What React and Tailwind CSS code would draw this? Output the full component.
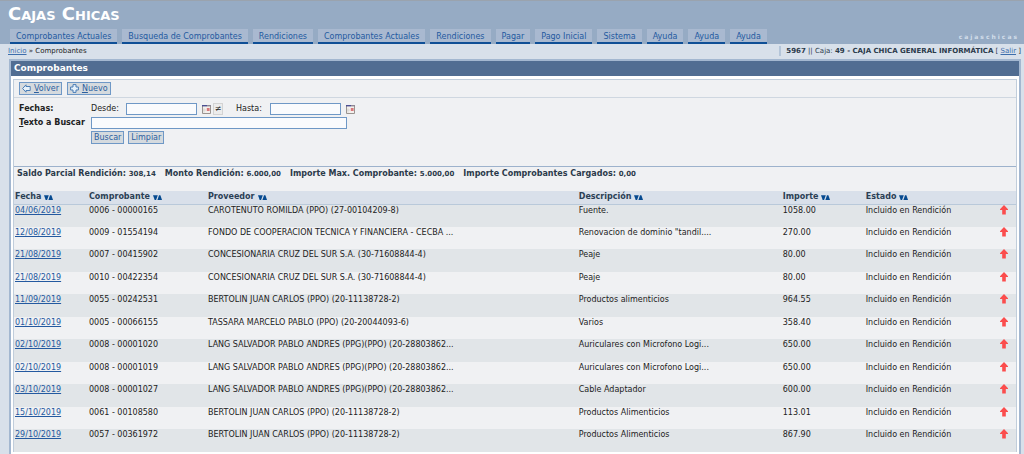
import React, { useState } from "react";

const menu = [
  "Comprobantes Actuales",
  "Busqueda de Comprobantes",
  "Rendiciones",
  "Comprobantes Actuales",
  "Rendiciones",
  "Pagar",
  "Pago Inicial",
  "Sistema",
  "Ayuda",
  "Ayuda",
  "Ayuda",
];

const totals = [
  { label: "Saldo Parcial Rendición:", value: "308,14" },
  { label: "Monto Rendición:", value: "6.000,00" },
  { label: "Importe Max. Comprobante:", value: "5.000,00" },
  { label: "Importe Comprobantes Cargados:", value: "0,00" },
];

const columns = [
  { name: "Fecha", width: "w-[74px]" },
  { name: "Comprobante", width: "w-[119px]" },
  { name: "Proveedor", width: "w-[37%]" },
  { name: "Descripción", width: "w-[204px]" },
  { name: "Importe", width: "w-[83px]" },
  { name: "Estado", width: "" },
];

const rows = [
  ["04/06/2019", "0006 - 00000165", "CAROTENUTO ROMILDA (PPO) (27-00104209-8)", "Fuente.", "1058.00"],
  ["12/08/2019", "0009 - 01554194", "FONDO DE COOPERACION TECNICA Y FINANCIERA - CECBA ...", 'Renovacion de dominio "tandil....', "270.00"],
  ["21/08/2019", "0007 - 00415902", "CONCESIONARIA CRUZ DEL SUR S.A. (30-71608844-4)", "Peaje", "80.00"],
  ["21/08/2019", "0010 - 00422354", "CONCESIONARIA CRUZ DEL SUR S.A. (30-71608844-4)", "Peaje", "80.00"],
  ["11/09/2019", "0055 - 00242531", "BERTOLIN JUAN CARLOS (PPO) (20-11138728-2)", "Productos alimenticios", "964.55"],
  ["01/10/2019", "0005 - 00066155", "TASSARA MARCELO PABLO (PPO) (20-20044093-6)", "Varios", "358.40"],
  ["02/10/2019", "0008 - 00001020", "LANG SALVADOR PABLO ANDRES (PPG)(PPO) (20-28803862...", "Auriculares con Microfono Logi...", "650.00"],
  ["02/10/2019", "0008 - 00001019", "LANG SALVADOR PABLO ANDRES (PPG)(PPO) (20-28803862...", "Auriculares con Microfono Logi...", "650.00"],
  ["03/10/2019", "0008 - 00001027", "LANG SALVADOR PABLO ANDRES (PPG)(PPO) (20-28803862...", "Cable Adaptador", "600.00"],
  ["15/10/2019", "0061 - 00108580", "BERTOLIN JUAN CARLOS (PPO) (20-11138728-2)", "Productos Alimenticios", "113.01"],
  ["29/10/2019", "0057 - 00361972", "BERTOLIN JUAN CARLOS (PPO) (20-11138728-2)", "Productos Alimenticios", "867.90"],
];

function ActionButton({ children, ...props }) {
  return (
    <button
      type="button"
      className="flex h-[13px] items-center gap-[3px] border border-[#6f98c6] bg-[#d5dade] px-[2px] text-[8px] leading-none text-[#2c5f9e]"
      {...props}
    >
      {children}
    </button>
  );
}

function BackIcon() {
  return (
    <svg viewBox="0 0 9 9" className="h-[9px] w-[9px]" fill="#e6f1fa" stroke="#4a7db5" strokeLinejoin="round">
      <path d="M.6 4.5 4 .8v1.7h4.2v4H4v1.7z" />
    </svg>
  );
}

function PlusIcon() {
  return (
    <svg viewBox="0 0 9 9" className="h-[9px] w-[9px]" fill="#e6f1fa" stroke="#4a7db5" strokeLinejoin="round">
      <path d="M3 .6h3V3h2.4v3H6v2.4H3V6H.6V3H3z" />
    </svg>
  );
}

function CalendarButton({ label }) {
  return (
    <button type="button" aria-label={label}>
      <svg viewBox="0 0 9 9" className="block h-[9px] w-[9px]">
        <path d="M.5.5h8v8h-8z" fill="#f3efec" stroke="#9a9490" />
        <path d="M0 0h5v1.4H0z" fill="#4b4f92" />
        <path d="M5 0h4v1.4H5z" fill="#8d8794" />
        <path d="M2 3.2v4.5M1 5h3" stroke="#cfcac6" strokeWidth=".6" />
        <path d="M4.8 3h2.8v3H4.8z" fill="#d9777a" />
      </svg>
    </button>
  );
}

function SortArrows({ name }) {
  return (
    <button type="button" aria-label={`Ordenar por ${name}`} className="ml-[3px] align-[-1px]">
      <svg viewBox="0 0 9 5" className="h-[5px] w-[9px]" fill="#064a90">
        <path d="M0 .2h4.8L3.1 4.9H1.7z" />
        <path d="M4.4 4.9H9L7.4.2H6z" />
      </svg>
    </button>
  );
}

function UpArrow() {
  return (
    <svg viewBox="0 0 8 10" className="h-[10px] w-[8px]" fill="#fb4d4d">
      <path d="M4 0 8 4.2v.9H5.8v4.4H2.2V5.1H0v-.9z" />
    </svg>
  );
}

function App() {
  const [desde, setDesde] = useState("");
  const [hasta, setHasta] = useState("");
  const [texto, setTexto] = useState("");

  const limpiar = () => {
    setDesde("");
    setHasta("");
    setTexto("");
  };

  return (
    <div className="min-h-screen overflow-hidden bg-[#d8e0ea] font-['DejaVu_Sans',Verdana,sans-serif] text-[8px] leading-3 text-[#222]">
      <header className="border-t border-[#9aa3ae] bg-[#96abc4]">
        <h1 className="px-2 pt-[3px] text-[18px] leading-5 font-bold text-white [font-variant:small-caps]">
          Cajas Chicas
        </h1>
        <div className="flex items-end justify-between pt-[5px] pr-[5px] pl-[10px]">
          <nav className="flex gap-[5px]">
            {menu.map((item, i) => (
              <a
                key={i}
                href="#"
                className="border-b-2 border-[#0f4f96] bg-[#a9b9d0] px-[6px] pt-[2px] leading-[11px] whitespace-nowrap text-[#2459a0]"
              >
                {item}
              </a>
            ))}
          </nav>
          <span className="pb-px text-[6px] leading-3 font-bold tracking-[2px] text-[#d3deea]">cajaschicas</span>
        </div>
      </header>

      <div className="flex items-center justify-between px-2 pt-[1px] pb-[2px] text-[7px]">
        <div>
          <a href="#" className="text-[#3d6dab] underline">Inicio</a> » Comprobantes
        </div>
        <div className="-mr-[5px] border-l-2 border-[#b4c5d9] pl-[5px] leading-[10px] text-[#2b3a4a]">
          <b>5967</b> || Caja: <b>49 - CAJA CHICA GENERAL INFORMÁTICA</b> [{" "}
          <a href="#" className="text-[#3d6dab] underline">Salir</a> ]
        </div>
      </div>

      <main className="mr-[3px] ml-[9px] border-2 border-[#a3b7d0] bg-white pb-[3px]">
        <h2 className="bg-[#516d92] px-[3px] text-[9px] leading-[15px] font-bold text-white">Comprobantes</h2>

        <div className="mx-[2px] mt-[3px] border-x border-t border-[#c0cddb] bg-[#f0f1f3]">
          <div className="flex gap-[5px] border-b border-[#cfd7e0] px-[5px] pt-[2px] pb-[2px]">
            <ActionButton>
              <BackIcon />
              <span><u>V</u>olver</span>
            </ActionButton>
            <ActionButton>
              <PlusIcon />
              <span><u>N</u>uevo</span>
            </ActionButton>
          </div>

          <form className="grid grid-cols-[72px_1fr] items-center gap-y-[2px] px-[5px] pt-[5px] pb-[22px]" onSubmit={(e) => e.preventDefault()}>
            <span className="font-bold">Fechas:</span>
            <div className="flex items-center">
              <label htmlFor="desde" className="w-[35px]">Desde:</label>
              <input
                id="desde"
                value={desde}
                onChange={(e) => setDesde(e.target.value)}
                className="mr-[5px] h-3 w-[71px] border border-[#6f98c6] bg-[#fafbfd] px-[2px]"
              />
              <CalendarButton label="Elegir fecha desde" />
              <button type="button" className="mr-[13px] ml-[2px] h-3 w-[10px] border border-[#d3d3d3] bg-[#ececec] leading-[10px]">
                ≠
              </button>
              <label htmlFor="hasta" className="w-[34px]">Hasta:</label>
              <input
                id="hasta"
                value={hasta}
                onChange={(e) => setHasta(e.target.value)}
                className="mr-[5px] h-3 w-[71px] border border-[#6f98c6] bg-[#fafbfd] px-[2px]"
              />
              <CalendarButton label="Elegir fecha hasta" />
            </div>
            <label htmlFor="texto" className="font-bold whitespace-nowrap"><u>T</u>exto a Buscar</label>
            <input
              id="texto"
              value={texto}
              onChange={(e) => setTexto(e.target.value)}
              className="h-3 w-[256px] border border-[#6f98c6] bg-[#fafbfd] px-[2px]"
            />
            <div className="col-start-2 flex gap-1">
              <ActionButton>Buscar</ActionButton>
              <ActionButton onClick={limpiar}>Limpiar</ActionButton>
            </div>
          </form>

          <div className="flex gap-[9px] border-t border-[#9db2cc] px-[3px] pt-[1px] pb-[11px] font-bold text-[#2b3a4a]">
            {totals.map((t) => (
              <span key={t.label}>
                {t.label} <span className="text-[7px]">{t.value}</span>
              </span>
            ))}
          </div>

          <table className="w-full table-fixed border-collapse">
            <thead>
              <tr className="h-[13px] border-b border-[#b9c9da] bg-[#d9e0ea] text-left text-[#2b3f55]">
                {columns.map((c) => (
                  <th key={c.name} className={`${c.width} px-px py-0`}>
                    {c.name}
                    <SortArrows name={c.name} />
                  </th>
                ))}
                <th className="w-[17px] p-0" />
              </tr>
            </thead>
            <tbody>
              {rows.map((row, i) => (
                <tr key={i} className="align-top leading-[11px] odd:h-[23px] odd:bg-[#e1e5e8] even:h-[22px]">
                  <td className="px-px py-0">
                    <a href="#" className="text-[#2459a0] underline">{row[0]}</a>
                  </td>
                  {row.slice(1).map((cell, j) => (
                    <td key={j} className="px-px py-0 whitespace-nowrap">{cell}</td>
                  ))}
                  <td className="px-px py-0">Incluido en Rendición</td>
                  <td className="px-px py-0">
                    <UpArrow />
                  </td>
                </tr>
              ))}
            </tbody>
          </table>
        </div>
      </main>
    </div>
  );
}

export default App;
